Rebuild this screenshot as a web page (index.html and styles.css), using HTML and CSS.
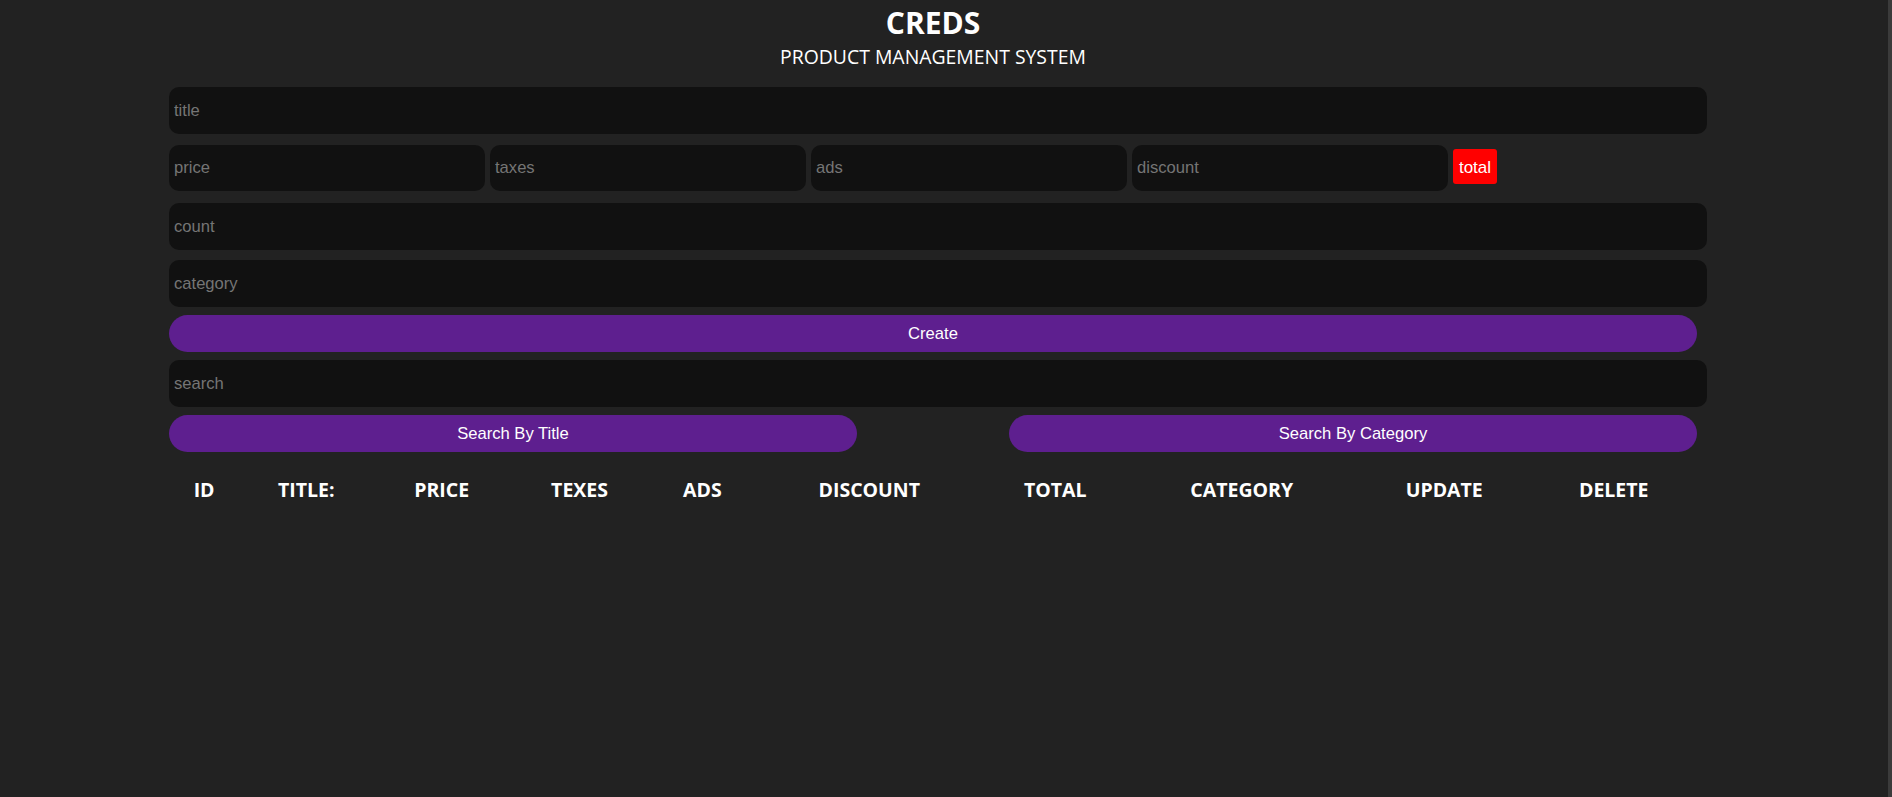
FILE: index.html
```html
<!DOCTYPE html>
<html lang="en">
<head>
<meta charset="utf-8">
<title>CREDS</title>
<link rel="stylesheet" href="styles.css">
</head>
<body>
<div class="page">
  <main class="crud">
    <header class="head">
      <h1 class="head-title">CREDS</h1>
      <p class="head-sub">PRODUCT MANAGEMENT SYSTEM</p>
    </header>
    <section class="inputs">
      <input class="field field-wide" type="text" placeholder="title">
      <div class="price">
        <input class="field field-price" type="number" placeholder="price">
        <input class="field field-price" type="number" placeholder="taxes">
        <input class="field field-price" type="number" placeholder="ads">
        <input class="field field-price" type="number" placeholder="discount">
        <small class="total">total</small>
      </div>
      <input class="field field-wide row-count" type="number" placeholder="count">
      <input class="field field-wide row-category" type="text" placeholder="category">
      <button class="btn btn-create" type="button">Create</button>
    </section>
    <section class="outputs">
      <input class="field field-wide row-search" type="text" placeholder="search">
      <div class="btn-search">
        <button class="btn btn-half" type="button">Search By Title</button>
        <button class="btn btn-half" type="button">Search By Category</button>
      </div>
      <table class="table">
        <colgroup>
          <col class="c-id"><col class="c-title"><col class="c-price"><col class="c-taxes"><col class="c-ads">
          <col class="c-discount"><col class="c-total"><col class="c-category"><col class="c-update"><col class="c-delete">
        </colgroup>
        <thead>
          <tr>
            <th>ID</th>
            <th>title:</th>
            <th>price</th>
            <th>texes</th>
            <th>ads</th>
            <th>discount</th>
            <th>total</th>
            <th>category</th>
            <th>update</th>
            <th>delete</th>
          </tr>
        </thead>
        <tbody></tbody>
      </table>
    </section>
  </main>
  <div class="edge"></div>
</div>
</body>
</html>
```
FILE: styles.css
```css
* {
  box-sizing: border-box;
}

html, body {
  margin: 0;
  padding: 0;
  height: 100%;
}

body {
  background: #222222;
  color: #ffffff;
  font-family: "Liberation Sans", Arial, sans-serif;
  overflow: hidden;
}

.page {
  display: flex;
  min-height: 100vh;
}

.crud {
  width: 1528px;
  margin-left: 169px;
  flex: none;
}

.edge {
  margin-left: auto;
  width: 4px;
  background: #3b3b3b;
  flex: none;
}

.head {
  text-align: center;
  font-family: "Open Sans", "Noto Sans", sans-serif;
}

.head-title {
  margin: 5px 0 0;
  font-size: 30px;
  line-height: 36px;
  font-weight: 700;
}

.head-sub {
  margin: 4px 0 0;
  font-size: 19.4px;
  line-height: 24px;
  font-weight: 400;
}

.inputs,
.outputs {
  display: flex;
  flex-direction: column;
  align-items: flex-start;
}

.inputs {
  padding-top: 18px;
}

.field {
  height: 47px;
  border: none;
  outline: none;
  background: #111111;
  border-radius: 10px;
  padding: 0 5px;
  color: #ffffff;
  font-family: "Liberation Sans", Arial, sans-serif;
  font-size: 16.6px;
}

.field::placeholder {
  color: #757575;
}

.field::-webkit-outer-spin-button,
.field::-webkit-inner-spin-button {
  -webkit-appearance: none;
  margin: 0;
}

.field[type="number"] {
  -moz-appearance: textfield;
}

.field-wide {
  width: 1538px;
}

.price {
  display: flex;
  align-items: flex-start;
  gap: 5px;
  margin-top: 11px;
}

.field-price {
  width: 316px;
  height: 46px;
}

.total {
  margin-top: 4px;
  height: 35px;
  width: 44px;
  background: #ff0000;
  border-radius: 3px;
  color: #ffffff;
  font-size: 17px;
  line-height: 37px;
  text-align: center;
}

.row-count {
  margin-top: 12px;
}

.row-category {
  margin-top: 10px;
}

.btn {
  height: 37px;
  border: none;
  border-radius: 20px;
  background: #5e1f8f;
  color: #ffffff;
  font-family: "Liberation Sans", Arial, sans-serif;
  font-size: 16.6px;
  cursor: pointer;
  padding: 0;
}

.btn-create {
  width: 1528px;
  margin-top: 8px;
}

.row-search {
  margin-top: 8px;
}

.btn-search {
  width: 1528px;
  margin-top: 8px;
  display: flex;
  justify-content: space-between;
}

.btn-half {
  width: 688px;
}

.table {
  width: 1528px;
  margin-top: 16px;
  border-spacing: 2.5px;
  table-layout: fixed;
  font-family: "Open Sans", "Noto Sans", sans-serif;
}

.table th {
  padding: 6px;
  font-size: 19.5px;
  line-height: 27px;
  font-weight: 700;
  text-transform: uppercase;
  text-align: center;
  white-space: nowrap;
}

.c-id { width: 66px; }
.c-title { width: 134px; }
.c-price { width: 132px; }
.c-taxes { width: 139px; }
.c-ads { width: 102px; }
.c-discount { width: 227px; }
.c-total { width: 140px; }
.c-category { width: 228px; }
.c-update { width: 172px; }
.c-delete { width: 162px; }
```
